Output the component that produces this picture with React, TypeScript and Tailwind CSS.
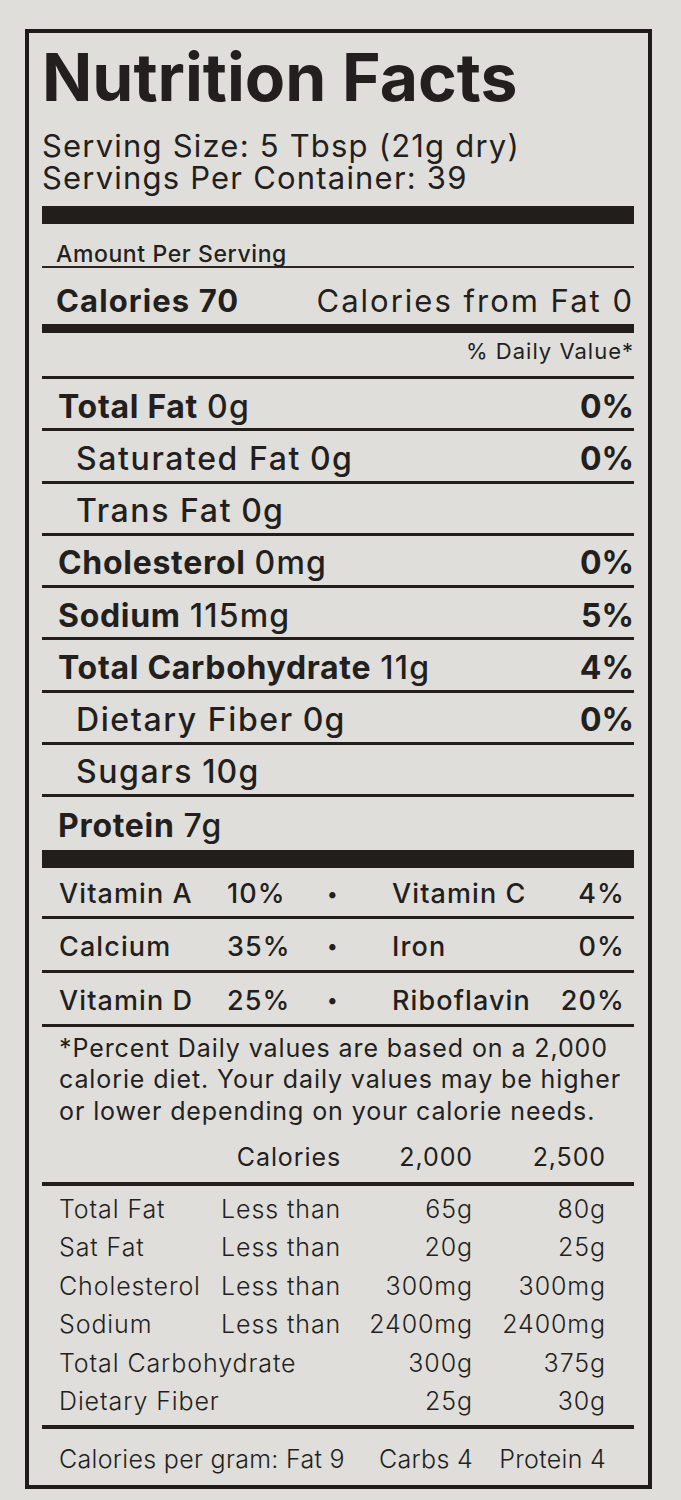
import React from 'react';

type Nutrient = { label: string; amount: string; dv?: string; bold?: boolean; indent?: boolean };

const nutrients: Nutrient[] = [
  { label: 'Total Fat', amount: '0g', dv: '0%', bold: true },
  { label: 'Saturated Fat', amount: '0g', dv: '0%', indent: true },
  { label: 'Trans Fat', amount: '0g', indent: true },
  { label: 'Cholesterol', amount: '0mg', dv: '0%', bold: true },
  { label: 'Sodium', amount: '115mg', dv: '5%', bold: true },
  { label: 'Total Carbohydrate', amount: '11g', dv: '4%', bold: true },
  { label: 'Dietary Fiber', amount: '0g', dv: '0%', indent: true },
  { label: 'Sugars', amount: '10g', indent: true },
];

const vitamins = [
  { a: 'Vitamin A', av: '10%', b: 'Vitamin C', bv: '4%', h: 'h-[51px]' },
  { a: 'Calcium', av: '35%', b: 'Iron', bv: '0%', h: 'h-[54px]' },
  { a: 'Vitamin D', av: '25%', b: 'Riboflavin', bv: '20%', h: 'h-[54px]' },
];

const limits = [
  ['Total Fat', 'Less than', '65g', '80g'],
  ['Sat Fat', 'Less than', '20g', '25g'],
  ['Cholesterol', 'Less than', '300mg', '300mg'],
  ['Sodium', 'Less than', '2400mg', '2400mg'],
  ['Total Carbohydrate', '', '300g', '375g'],
  ['Dietary Fiber', '', '25g', '30g'],
];

const App: React.FC = () => {
  return (
    <div className="min-h-[1500px] w-[681px] bg-[#dfdedb] pt-[29px] font-['Inter',sans-serif] text-[#231f1e]">
      <div className="ml-[25px] h-[1460px] w-[627px] border-4 border-[#1f1b1a] pl-[13px] pr-[14px]">
        {/* Title + serving info */}
        <div className="h-[97px] pt-[11px] text-[66px] font-bold leading-[66px]">
          Nutrition Facts
        </div>
        <div className="text-[31px] leading-[31.5px] tracking-[1.2px]">
          <div>Serving Size: 5 Tbsp (21g dry)</div>
          <div>Servings Per Container: 39</div>
        </div>
        <div className="mt-[13px] h-[18px] bg-[#221e1c]" />

        {/* Calories */}
        <div className="border-b-2 border-[#2a2624] pl-[14px] pt-[18px] text-[23px] font-medium leading-[24px] tracking-[0.6px]">
          Amount Per Serving
        </div>
        <div className="flex h-[56px] items-center justify-between pl-[14px] pt-[9px] text-[31px] leading-none">
          <span className="font-bold tracking-[1.1px]">Calories 70</span>
          <span className="tracking-[2px]">Calories from Fat 0</span>
        </div>
        <div className="h-[9px] bg-[#221e1c]" />
        <div className="h-[46px] border-b-[3px] border-[#221e1c] pt-[7px] text-right text-[22px] leading-[22px] tracking-[1px]">
          % Daily Value*
        </div>

        {/* Nutrient rows */}
        {nutrients.map((n) => (
          <div
            key={n.label}
            className={`flex h-[52.25px] items-center justify-between border-b-[3px] border-[#221e1c] pt-[6px] text-[32px] leading-none ${n.indent ? 'pl-[34px]' : 'pl-[16px]'}`}
          >
            <span>
              <span className={n.bold ? 'font-bold tracking-[0.7px]' : 'font-medium tracking-[1.6px]'}>{n.label}</span>{' '}
              <span className="font-medium tracking-[1.2px]">{n.amount}</span>
            </span>
            {n.dv && <span className="font-bold">{n.dv}</span>}
          </div>
        ))}
        <div className="flex h-[52.5px] items-center pl-[16px] pt-[6px] text-[32px] leading-none">
          <span className="font-bold tracking-[0.7px]">Protein</span>&nbsp;<span className="font-medium tracking-[1.2px]">7g</span>
        </div>
        <div className="h-[18px] bg-[#221e1c]" />

        {/* Vitamins */}
        {vitamins.map((v) => (
          <div key={v.a} className={`flex items-center border-b-[3px] border-[#221e1c] pl-[17px] pr-[9px] pt-[4px] text-[27px] font-medium leading-none tracking-[1.1px] ${v.h}`}>
            <span className="w-[168px]">{v.a}</span>
            <span className="w-[80px]">{v.av}</span>
            <span className="w-[52px] text-center text-[20px]">•</span>
            <span className="flex-1 pl-[33px]">{v.b}</span>
            <span>{v.bv}</span>
          </div>
        ))}

        {/* Footnote */}
        <div className="whitespace-nowrap pl-[17px] pt-[6px] text-[25px] leading-[31.5px] tracking-[0.9px]">
          <div>*Percent Daily values are based on a 2,000</div>
          <div>calorie diet. Your daily values may be higher</div>
          <div>or lower depending on your calorie needs.</div>
        </div>

        <div className="mt-[15px] grid grid-cols-[162px_120px_132px_133px] border-b-4 border-[#221e1c] pb-[8.5px] pl-[17px] text-[25px] leading-[31px] tracking-[0.9px]">
          <span />
          <span className="text-right">Calories</span>
          <span className="text-right">2,000</span>
          <span className="text-right">2,500</span>
        </div>

        <div className="border-b-4 border-[#221e1c] pb-[3.5px] pl-[17px] pt-[4px] text-[25px] font-light leading-[38.6px] tracking-[0.9px]">
          {limits.map((r) => (
            <div key={r[0]} className="grid grid-cols-[162px_120px_132px_133px]">
              <span className="whitespace-nowrap">{r[0]}</span>
              <span className="whitespace-nowrap">{r[1]}</span>
              <span className="text-right">{r[2]}</span>
              <span className="text-right">{r[3]}</span>
            </div>
          ))}
        </div>

        <div className="grid grid-cols-[162px_120px_132px_133px] pl-[17px] pt-[15px] text-[25px] font-light leading-[31px] tracking-[0.3px]">
          <span className="col-span-2 whitespace-nowrap">Calories per gram: Fat 9</span>
          <span className="text-right">Carbs 4</span>
          <span className="text-right">Protein 4</span>
        </div>
      </div>
    </div>
  );
};

export default App;
